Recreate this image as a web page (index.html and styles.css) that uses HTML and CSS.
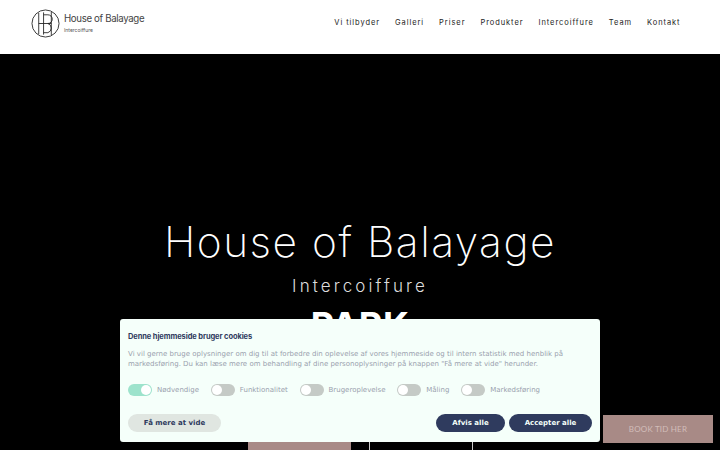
FILE: index.html
```html
<!DOCTYPE html>
<html lang="da">
<head>
<meta charset="utf-8">
<title>House of Balayage</title>
<link rel="stylesheet" href="styles.css">
</head>
<body>
<header class="site-header">
  <a class="logo" href="#">
    <svg class="logo-mark" width="29" height="29" viewBox="0 0 30 30" fill="none" stroke="#222" stroke-width="0.9">
      <circle cx="15" cy="15" r="14"/>
      <path d="M8 4V26M21 3V27M8 15H21M13 3.5V26.5M13 6H17.5A4.5 4.5 0 0 1 17.5 15A5 5 0 0 1 17.5 24.5H13"/>
    </svg>
    <span class="logo-text">
      <span class="logo-name">House of Balayage</span>
      <span class="logo-sub">Intercoiffure</span>
    </span>
  </a>
  <nav class="nav">
    <a href="#">Vi tilbyder</a>
    <a href="#">Galleri</a>
    <a href="#">Priser</a>
    <a href="#">Produkter</a>
    <a href="#">Intercoiffure</a>
    <a href="#">Team</a>
    <a href="#">Kontakt</a>
  </nav>
</header>
<main class="hero">
  <h1 class="hero-title">House of Balayage</h1>
  <p class="hero-sub">Intercoiffure</p>
  <p class="hero-place">PARK</p>
  <div class="hero-actions">
    <a class="hero-btn hero-btn-fill" href="#"></a>
    <a class="hero-btn hero-btn-line" href="#"></a>
  </div>
</main>
<a class="book" href="#">BOOK TID HER</a>
<section class="cookie">
  <h2 class="cookie-title">Denne hjemmeside bruger cookies</h2>
  <p class="cookie-text">Vi vil gerne bruge oplysninger om dig til at forbedre din oplevelse af vores hjemmeside og til intern statistik med henblik på markedsføring. Du kan læse mere om behandling af dine personoplysninger på knappen "Få mere at vide" herunder.</p>
  <div class="toggles">
    <span class="toggle toggle-on"><i class="track"></i>Nødvendige</span>
    <span class="toggle"><i class="track"></i>Funktionalitet</span>
    <span class="toggle"><i class="track"></i>Brugeroplevelse</span>
    <span class="toggle"><i class="track"></i>Måling</span>
    <span class="toggle"><i class="track"></i>Markedsføring</span>
  </div>
  <div class="cookie-actions">
    <button class="pill pill-light">Få mere at vide</button>
    <span class="cookie-right">
      <button class="pill pill-dark pill-reject">Afvis alle</button>
      <button class="pill pill-dark pill-accept">Accepter alle</button>
    </span>
  </div>
</section>
</body>
</html>
```
FILE: styles.css
```css
* { box-sizing: border-box; }
html, body { margin: 0; height: 450px; overflow: hidden; background: #000; }
body { font-family: "Inter", sans-serif; display: flex; flex-direction: column; }
a { text-decoration: none; color: inherit; }

.site-header {
  height: 54px; background: #fff; display: flex; align-items: center;
  justify-content: space-between; padding: 0 39.5px 8px 31px; flex: none;
}
.logo { display: flex; align-items: center; gap: 4px; color: #333; }
.logo-mark { display: block; }
.logo-text { display: flex; flex-direction: column; }
.logo-name { font: 400 9.7px/12px "Inter", sans-serif; letter-spacing: -0.35px; color: #444; }
.logo-sub { font: 400 5px/8px "Inter", sans-serif; color: #555; margin-top: 1px; }
.nav { display: flex; gap: 15px; font: 400 7.5px/12px "Inter", sans-serif; letter-spacing: 0.93px; color: #222; }

.hero { flex: 1; background: #000; color: #fff; display: flex; flex-direction: column; align-items: center; padding-top: 160px; position: relative; }
.hero-title { margin: 0; font: 200 42.5px/56px "Inter", sans-serif; letter-spacing: 1.5px; color: #fff; white-space: nowrap; }
.hero-sub { margin: 3px 0 0; font: 300 17px/26px "Inter", sans-serif; letter-spacing: 3.1px; color: #ddd; }
.hero-place { margin: 6px 0 0; font: 700 36px/40px "Inter", sans-serif; letter-spacing: 0.5px; color: #fff; }
.hero-actions { display: flex; gap: 18px; position: absolute; top: 387px; left: 248px; }
.hero-btn { display: block; width: 103px; height: 40px; }
.hero-btn-fill { background: #a88a86; }
.hero-btn-line { width: 104px; border: 1px solid #ccc; background: #000; }

.book {
  position: fixed; left: 603px; top: 415px; width: 110px; height: 28px;
  background: #a88a86; color: #d2bdba; display: flex; align-items: center; justify-content: center;
  font: 400 8px/1 "Lato", sans-serif; letter-spacing: 0.2px;
}

.cookie {
  position: fixed; left: 120px; top: 319px; width: 480px; height: 123px;
  background: #f5fffa; border-radius: 3px; padding: 12px 8px 10px; color: #777f92;
  display: flex; flex-direction: column;
}
.cookie-title { margin: 0; font: 700 7.5px/11px "Inter", sans-serif; letter-spacing: -0.1px; color: #2f3b5e; }
.cookie-text { margin: 7px 0 0; font: 400 7px/10px "DejaVu Sans", sans-serif; color: #9a9fae; }
.toggles { display: flex; gap: 11.8px; margin-top: 15px; font: 400 7px/12px "DejaVu Sans", sans-serif; color: #9a9fae; }
.toggle { display: flex; align-items: center; gap: 5px; }
.track { display: block; position: relative; width: 24px; height: 12px; border-radius: 6px; background: #c5cac6; }
.track::after { content: ""; position: absolute; left: 1px; top: 1px; width: 10px; height: 10px; border-radius: 50%; background: #fff; }
.toggle-on .track { background: #9de3cc; }
.toggle-on .track::after { left: auto; right: 1px; }
.cookie-actions { display: flex; justify-content: space-between; margin-top: auto; }
.cookie-right { display: flex; gap: 4px; }
.pill { height: 18px; border: 0; border-radius: 9px; padding: 0; font: 700 7px/18px "DejaVu Sans", sans-serif; }
.pill-light { width: 93px; background: #e0e6e1; color: #2f3b5e; }
.pill-dark { background: #2f3b5e; color: #f5fffa; }
.pill-reject { width: 69px; }
.pill-accept { width: 83px; }
```
